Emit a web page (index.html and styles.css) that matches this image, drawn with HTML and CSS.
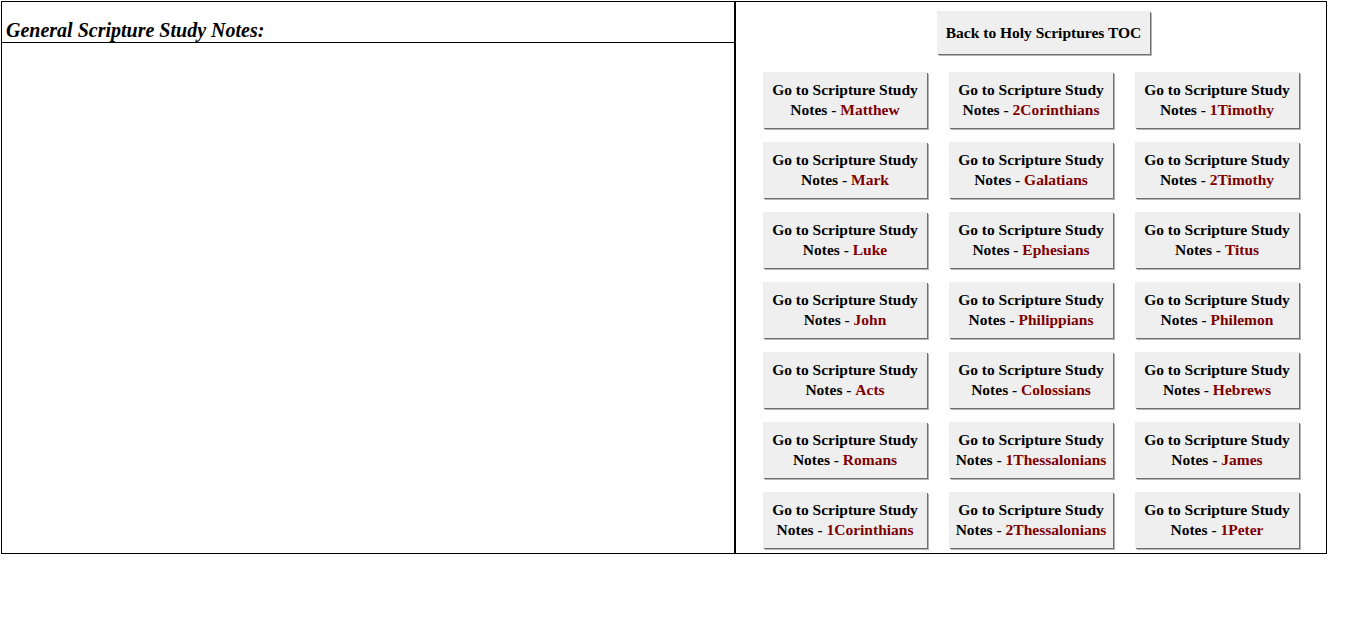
FILE: index.html
```html
<!DOCTYPE html>
<html lang="en">
<head>
    <meta charset="UTF-8">
    <title>General Scripture Study Notes</title>
    <link rel="stylesheet" href="styles.css">
</head>
<body>
    <div class="layout">
        <!-- left: notes column -->
        <div class="notes">
            <div class="notes-title">General Scripture Study Notes:</div>
            <div class="notes-body"></div>
        </div>

        <!-- right: navigation buttons -->
        <div class="nav">
            <div class="nav-top">
                <a href="#" class="btn btn-toc"><span>Back to Holy Scriptures TOC</span></a>
            </div>
            <div class="book-grid">
                <a href="#" class="btn"><span>Go to Scripture Study<br>Notes - <b class="book">Matthew</b></span></a>
                <a href="#" class="btn"><span>Go to Scripture Study<br>Notes - <b class="book">2Corinthians</b></span></a>
                <a href="#" class="btn"><span>Go to Scripture Study<br>Notes - <b class="book">1Timothy</b></span></a>

                <a href="#" class="btn"><span>Go to Scripture Study<br>Notes - <b class="book">Mark</b></span></a>
                <a href="#" class="btn"><span>Go to Scripture Study<br>Notes - <b class="book">Galatians</b></span></a>
                <a href="#" class="btn"><span>Go to Scripture Study<br>Notes - <b class="book">2Timothy</b></span></a>

                <a href="#" class="btn"><span>Go to Scripture Study<br>Notes - <b class="book">Luke</b></span></a>
                <a href="#" class="btn"><span>Go to Scripture Study<br>Notes - <b class="book">Ephesians</b></span></a>
                <a href="#" class="btn"><span>Go to Scripture Study<br>Notes - <b class="book">Titus</b></span></a>

                <a href="#" class="btn"><span>Go to Scripture Study<br>Notes - <b class="book">John</b></span></a>
                <a href="#" class="btn"><span>Go to Scripture Study<br>Notes - <b class="book">Philippians</b></span></a>
                <a href="#" class="btn"><span>Go to Scripture Study<br>Notes - <b class="book">Philemon</b></span></a>

                <a href="#" class="btn"><span>Go to Scripture Study<br>Notes - <b class="book">Acts</b></span></a>
                <a href="#" class="btn"><span>Go to Scripture Study<br>Notes - <b class="book">Colossians</b></span></a>
                <a href="#" class="btn"><span>Go to Scripture Study<br>Notes - <b class="book">Hebrews</b></span></a>

                <a href="#" class="btn"><span>Go to Scripture Study<br>Notes - <b class="book">Romans</b></span></a>
                <a href="#" class="btn"><span>Go to Scripture Study<br>Notes - <b class="book">1Thessalonians</b></span></a>
                <a href="#" class="btn"><span>Go to Scripture Study<br>Notes - <b class="book">James</b></span></a>

                <a href="#" class="btn"><span>Go to Scripture Study<br>Notes - <b class="book">1Corinthians</b></span></a>
                <a href="#" class="btn"><span>Go to Scripture Study<br>Notes - <b class="book">2Thessalonians</b></span></a>
                <a href="#" class="btn"><span>Go to Scripture Study<br>Notes - <b class="book">1Peter</b></span></a>
            </div>
        </div>
    </div>
</body>
</html>
```

FILE: styles.css
```css
/* base */
body {
    margin: 0;
    padding: 1px;
    background: #fff;
    font-family: "Liberation Serif", "Times New Roman", serif;
    color: #000;
}

/* two-column table */
.layout {
    display: flex;
    width: 1324px;
    border: 1px solid #000;
}

/* notes column */
.notes {
    width: 732px;
    border-right: 2px solid #000;
    display: flex;
    flex-direction: column;
}

.notes-title {
    font-size: 20px;
    font-weight: bold;
    font-style: italic;
    padding: 17px 4px 0;
    height: 23px;
    line-height: 23px;
    border-bottom: 1px solid #000;
}

.notes-body {
    flex: 1;
}

/* navigation column */
.nav {
    flex: 1;
    padding: 9px 0 5px;
}

.nav-top {
    display: flex;
    justify-content: center;
    margin-bottom: 18px;
    padding-left: 25px;
}

/* buttons */
.btn {
    display: flex;
    align-items: center;
    justify-content: center;
    text-align: center;
    white-space: nowrap;
    background: #efefef;
    color: #000;
    text-decoration: none;
    font-weight: bold;
    font-size: 15.5px;
    line-height: 20px;
    box-shadow: 1px 1px 0 #6f6f6f, 2px 2px 0 #b4b4b4;
}

.btn-toc {
    height: 43px;
    padding: 0 8px;
    min-width: 197px;
}

.book {
    color: #800000;
}

/* 3 x 7 grid of book links */
.book-grid {
    display: grid;
    grid-template-columns: repeat(3, 186px);
    justify-content: center;
    row-gap: 14px;
}

.book-grid .btn {
    justify-self: center;
    min-width: 164px;
    height: 56px;
    padding: 0 4px;
    box-sizing: border-box;
}
```
